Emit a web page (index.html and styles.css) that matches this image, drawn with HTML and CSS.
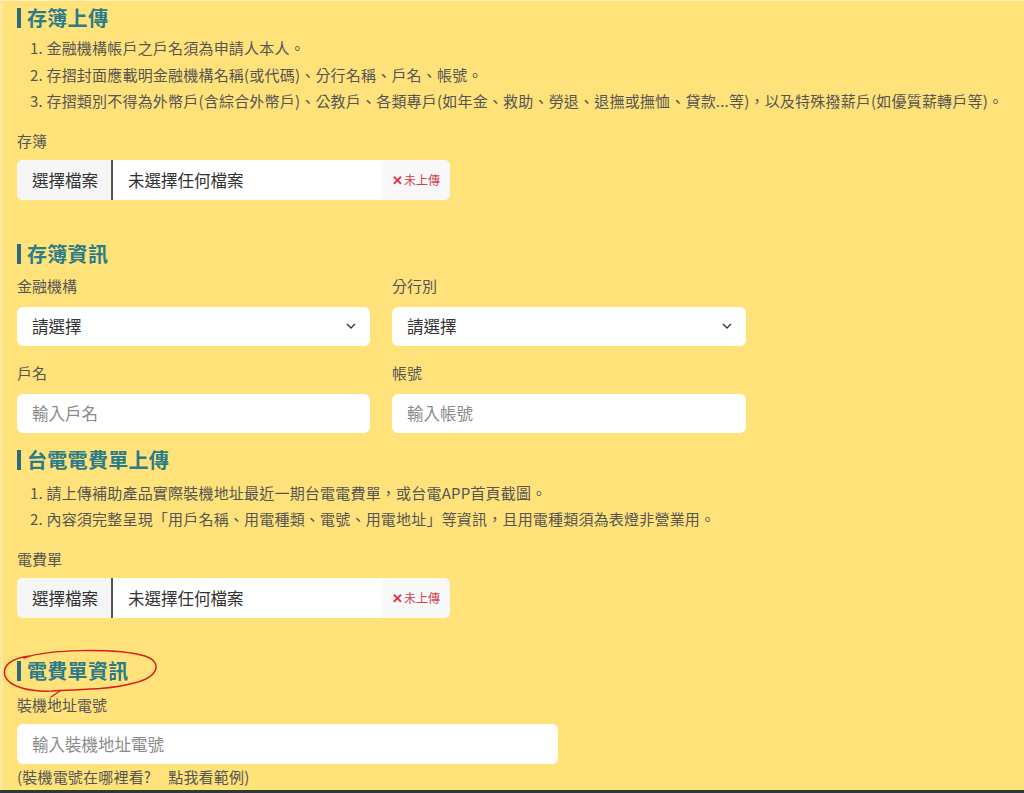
FILE: index.html
```html
<!DOCTYPE html>
<html lang="zh-Hant">
<head>
<meta charset="utf-8">
<title>存簿上傳</title>
<link rel="stylesheet" href="styles.css">
</head>
<body>
<main class="page">
  <h2 class="sec-title first">存簿上傳</h2>
  <ul class="notes">
    <li>1. 金融機構帳戶之戶名須為申請人本人。</li>
    <li>2. 存摺封面應載明金融機構名稱(或代碼)、分行名稱、戶名、帳號。</li>
    <li>3. 存摺類別不得為外幣戶(含綜合外幣戶)、公教戶、各類專戶(如年金、救助、勞退、退撫或撫恤、貸款...等)，以及特殊撥薪戶(如優質薪轉戶等)。</li>
  </ul>
  <div class="label l-file">存簿</div>
  <div class="file">
    <span class="file-btn">選擇檔案</span>
    <span class="file-name">未選擇任何檔案</span>
    <span class="file-status"><b class="x">✕</b>未上傳</span>
  </div>

  <h2 class="sec-title s2">存簿資訊</h2>
  <div class="grid">
    <div class="field">
      <div class="label">金融機構</div>
      <div class="select"><span>請選擇</span><svg class="chev" width="10" height="6" viewBox="0 0 10 6"><polyline points="1,1 5,5 9,1" fill="none" stroke="#333" stroke-width="1.4"/></svg></div>
    </div>
    <div class="field">
      <div class="label">分行別</div>
      <div class="select"><span>請選擇</span><svg class="chev" width="10" height="6" viewBox="0 0 10 6"><polyline points="1,1 5,5 9,1" fill="none" stroke="#333" stroke-width="1.4"/></svg></div>
    </div>
    <div class="field row2">
      <div class="label">戶名</div>
      <div class="input">輸入戶名</div>
    </div>
    <div class="field row2">
      <div class="label">帳號</div>
      <div class="input">輸入帳號</div>
    </div>
  </div>

  <h2 class="sec-title s3">台電電費單上傳</h2>
  <ul class="notes n3">
    <li>1. 請上傳補助產品實際裝機地址最近一期台電電費單，或台電APP首頁截圖。</li>
    <li>2. 內容須完整呈現「用戶名稱、用電種類、電號、用電地址」等資訊，且用電種類須為表燈非營業用。</li>
  </ul>
  <div class="label l-file">電費單</div>
  <div class="file">
    <span class="file-btn">選擇檔案</span>
    <span class="file-name">未選擇任何檔案</span>
    <span class="file-status"><b class="x">✕</b>未上傳</span>
  </div>

  <div class="annot-wrap">
    <h2 class="sec-title s4">電費單資訊</h2>
    <svg class="annot" width="164" height="52" viewBox="0 0 164 52">
      <path d="M22 9 C46 0, 114 -1, 143 7 C161 13, 157 28, 132 34 C102 42, 72 40, 50 42 C28 43, 7 38, 3 27 C0 16, 10 9, 28 7" fill="none" stroke="#d81e1e" stroke-width="1.5" stroke-linecap="round"/>
      <path d="M58 42 C55 44, 52 46, 49 48" fill="none" stroke="#d81e1e" stroke-width="1.3" stroke-linecap="round"/>
    </svg>
  </div>
  <div class="label l-addr">裝機地址電號</div>
  <div class="input wide">輸入裝機地址電號</div>
  <div class="hint">(裝機電號在哪裡看?<span class="gap"></span>點我看範例)</div>
</main>
<div class="bottom-line"></div>
</body>
</html>
```

FILE: styles.css
```css
html, body {
  margin: 0;
  padding: 0;
}
body {
  background: #ffe27a;
  font-family: "Noto Sans CJK TC", "Noto Sans", sans-serif;
  color: #555;
  height: 793px;
  overflow: hidden;
  border-top: 1px solid #fff0b8;
  box-sizing: border-box;
  border-left: 3px solid #fde79c;
}
.page {
  padding: 0 0 0 14px;
  height: 789px;
  box-sizing: border-box;
  overflow: hidden;
}
.sec-title {
  margin: 0;
  font-size: 20px;
  line-height: 20px;
  font-weight: 700;
  color: #2b7b88;
  border-left: 4px solid #2a6d7c;
  padding-left: 6px;
  letter-spacing: 0.3px;
}
.sec-title.first { margin-top: 7px; }
.sec-title.s2 { margin-top: 44px; }
.sec-title.s3 { margin-top: 17px; }
.sec-title.s4 { margin-top: 0; }
.notes {
  list-style: none;
  margin: 7px 0 0;
  padding: 0 0 0 13px;
  font-size: 15px;
  line-height: 26.5px;
  letter-spacing: 0.2px;
  color: #555;
  white-space: nowrap;
}
.notes.n3 { margin-top: 10px; }
.label {
  font-size: 15px;
  line-height: 20px;
  color: #555;
}
.label.l-file { margin-top: 16px; }
.file {
  margin-top: 9px;
  width: 433px;
  height: 40px;
  display: flex;
  align-items: center;
  background: #fff;
  border-radius: 6px;
  overflow: hidden;
  font-size: 16.5px;
  color: #333;
}
.file-btn {
  width: 96px;
  height: 100%;
  display: flex;
  align-items: center;
  justify-content: center;
  background: #f6f6f6;
  border-right: 2px solid #555;
  box-sizing: border-box;
  padding-left: 2px;
}
.file-name {
  flex: 1;
  padding-left: 15px;
}
.file-status {
  width: 68px;
  height: 100%;
  display: flex;
  align-items: center;
  justify-content: center;
  background: #f8f8f8;
  color: #d43f4d;
  font-size: 12px;
}
.file-status .x {
  font-weight: 700;
  font-size: 13px;
  margin-right: 1px;
  color: #d8334a;
}
.grid {
  display: grid;
  grid-template-columns: 353px 354px;
  column-gap: 22px;
  margin-top: 12px;
}
.field .label { margin-bottom: 11px; }
.field.row2 { margin-top: 17px; }
.select, .input {
  height: 39px;
  background: #fff;
  border-radius: 6px;
  display: flex;
  align-items: center;
  box-sizing: border-box;
  padding: 0 14px 0 15px;
}
.select {
  justify-content: space-between;
  font-size: 16.5px;
  color: #333;
}
.input {
  font-size: 16.5px;
  color: #8a8a8a;
}
.input.wide {
  width: 541px;
  height: 40px;
  margin-top: 9px;
}
.annot-wrap {
  position: relative;
  margin-top: 43px;
}
.annot {
  position: absolute;
  left: -15px;
  top: -12px;
}
.label.l-addr { margin-top: 14px; }
.hint {
  margin-top: 3px;
  font-size: 15px;
  line-height: 20px;
  letter-spacing: 0.2px;
  color: #555;
}
.hint .gap {
  display: inline-block;
  width: 17px;
}
.bottom-line {
  position: fixed;
  left: 0;
  right: 0;
  bottom: 0;
  height: 3px;
  background: #2d3a32;
}
```
